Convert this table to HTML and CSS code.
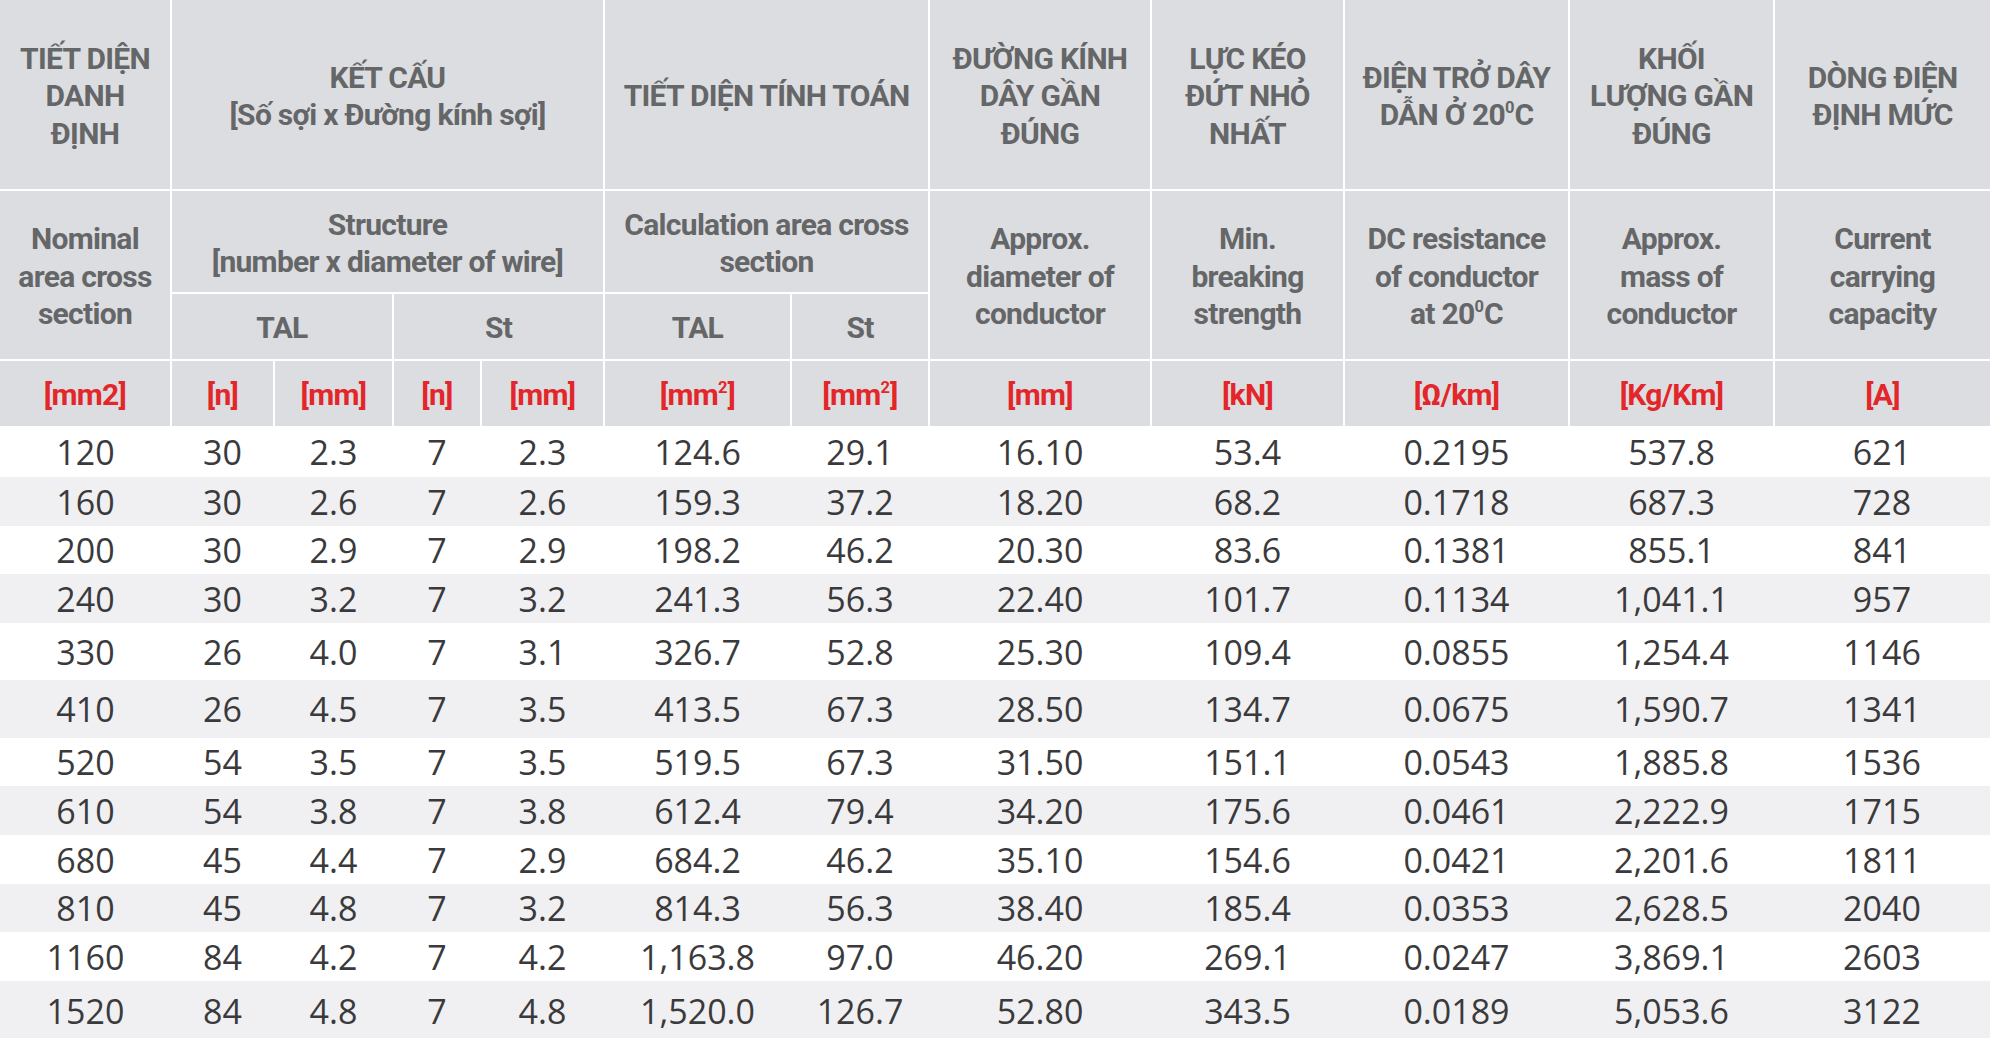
FILE: index.html
```html
<!DOCTYPE html>
<html lang="vi">
<head>
<meta charset="utf-8">
<title>Bảng thông số dây dẫn</title>
<link rel="stylesheet" href="styles.css">
</head>
<body>
<table class="spec">
  <colgroup>
    <col class="c1"><col class="c2"><col class="c3"><col class="c4"><col class="c5"><col class="c6">
    <col class="c7"><col class="c8"><col class="c9"><col class="c10"><col class="c11"><col class="c12">
  </colgroup>
  <thead>
    <tr class="hr-a">
      <th>TIẾT DIỆN<br>DANH<br>ĐỊNH</th>
      <th colspan="4">KẾT CẤU<br>[Số sợi x Đường kính sợi]</th>
      <th colspan="2">TIẾT DIỆN TÍNH TOÁN</th>
      <th>ĐƯỜNG KÍNH<br>DÂY GẦN<br>ĐÚNG</th>
      <th>LỰC KÉO<br>ĐỨT NHỎ<br>NHẤT</th>
      <th>ĐIỆN TRỞ DÂY<br>DẪN Ở 20<sup>0</sup>C</th>
      <th>KHỐI<br>LƯỢNG GẦN<br>ĐÚNG</th>
      <th class="last">DÒNG ĐIỆN<br>ĐỊNH MỨC</th>
    </tr>
    <tr class="hr-b">
      <th rowspan="2">Nominal<br>area cross<br>section</th>
      <th colspan="4">Structure<br>[number x diameter of wire]</th>
      <th colspan="2">Calculation area cross<br>section</th>
      <th rowspan="2">Approx.<br>diameter of<br>conductor</th>
      <th rowspan="2">Min.<br>breaking<br>strength</th>
      <th rowspan="2">DC resistance<br>of conductor<br>at 20<sup>0</sup>C</th>
      <th rowspan="2">Approx.<br>mass of<br>conductor</th>
      <th rowspan="2" class="last">Current<br>carrying<br>capacity</th>
    </tr>
    <tr class="hr-c">
      <th colspan="2">TAL</th>
      <th colspan="2">St</th>
      <th>TAL</th>
      <th>St</th>
    </tr>
    <tr class="hr-d unit">
      <th>[mm2]</th>
      <th>[n]</th>
      <th>[mm]</th>
      <th>[n]</th>
      <th>[mm]</th>
      <th>[mm<sup>2</sup>]</th>
      <th>[mm<sup>2</sup>]</th>
      <th>[mm]</th>
      <th>[kN]</th>
      <th>[Ω/km]</th>
      <th>[Kg/Km]</th>
      <th class="last">[A]</th>
    </tr>
  </thead>
  <tbody>
    <tr class="r51"><td>120</td><td>30</td><td>2.3</td><td>7</td><td>2.3</td><td>124.6</td><td>29.1</td><td>16.10</td><td>53.4</td><td>0.2195</td><td>537.8</td><td>621</td></tr>
    <tr class="r49 alt"><td>160</td><td>30</td><td>2.6</td><td>7</td><td>2.6</td><td>159.3</td><td>37.2</td><td>18.20</td><td>68.2</td><td>0.1718</td><td>687.3</td><td>728</td></tr>
    <tr class="r48"><td>200</td><td>30</td><td>2.9</td><td>7</td><td>2.9</td><td>198.2</td><td>46.2</td><td>20.30</td><td>83.6</td><td>0.1381</td><td>855.1</td><td>841</td></tr>
    <tr class="r49 alt"><td>240</td><td>30</td><td>3.2</td><td>7</td><td>3.2</td><td>241.3</td><td>56.3</td><td>22.40</td><td>101.7</td><td>0.1134</td><td>1,041.1</td><td>957</td></tr>
    <tr class="r57"><td>330</td><td>26</td><td>4.0</td><td>7</td><td>3.1</td><td>326.7</td><td>52.8</td><td>25.30</td><td>109.4</td><td>0.0855</td><td>1,254.4</td><td>1146</td></tr>
    <tr class="r58 alt"><td>410</td><td>26</td><td>4.5</td><td>7</td><td>3.5</td><td>413.5</td><td>67.3</td><td>28.50</td><td>134.7</td><td>0.0675</td><td>1,590.7</td><td>1341</td></tr>
    <tr class="r48"><td>520</td><td>54</td><td>3.5</td><td>7</td><td>3.5</td><td>519.5</td><td>67.3</td><td>31.50</td><td>151.1</td><td>0.0543</td><td>1,885.8</td><td>1536</td></tr>
    <tr class="r49 alt"><td>610</td><td>54</td><td>3.8</td><td>7</td><td>3.8</td><td>612.4</td><td>79.4</td><td>34.20</td><td>175.6</td><td>0.0461</td><td>2,222.9</td><td>1715</td></tr>
    <tr class="r49"><td>680</td><td>45</td><td>4.4</td><td>7</td><td>2.9</td><td>684.2</td><td>46.2</td><td>35.10</td><td>154.6</td><td>0.0421</td><td>2,201.6</td><td>1811</td></tr>
    <tr class="r48 alt"><td>810</td><td>45</td><td>4.8</td><td>7</td><td>3.2</td><td>814.3</td><td>56.3</td><td>38.40</td><td>185.4</td><td>0.0353</td><td>2,628.5</td><td>2040</td></tr>
    <tr class="r49"><td>1160</td><td>84</td><td>4.2</td><td>7</td><td>4.2</td><td>1,163.8</td><td>97.0</td><td>46.20</td><td>269.1</td><td>0.0247</td><td>3,869.1</td><td>2603</td></tr>
    <tr class="r60 alt"><td>1520</td><td>84</td><td>4.8</td><td>7</td><td>4.8</td><td>1,520.0</td><td>126.7</td><td>52.80</td><td>343.5</td><td>0.0189</td><td>5,053.6</td><td>3122</td></tr>
  </tbody>
</table>
</body>
</html>
```

FILE: styles.css
```css
html, body {
  margin: 0;
  padding: 0;
  background: #ffffff;
}

.spec {
  width: 1990px;
  table-layout: fixed;
  border-collapse: collapse;
  border-spacing: 0;
}

.c1 { width: 171px; }
.c2 { width: 103px; }
.c3 { width: 119px; }
.c4 { width: 88px; }
.c5 { width: 123px; }
.c6 { width: 187px; }
.c7 { width: 138px; }
.c8 { width: 222px; }
.c9 { width: 193px; }
.c10 { width: 225px; }
.c11 { width: 205px; }
.c12 { width: 216px; }

.spec th {
  background: #dcdde0;
  color: #656668;
  font-family: Roboto, "Open Sans", "Liberation Sans", sans-serif;
  font-weight: 700;
  font-size: 30px;
  letter-spacing: -0.7px;
  line-height: 37.5px;
  text-align: center;
  vertical-align: middle;
  padding: 3px 0 0;
  border-right: 2px solid #ffffff;
  border-bottom: 2px solid #ffffff;
  white-space: nowrap;
}

.spec th.last {
  border-right: none;
}

.spec .hr-d th {
  border-bottom: none;
}

.spec th sup {
  font-size: 0.55em;
  line-height: 0;
  vertical-align: 0.75em;
  letter-spacing: 0;
}

.unit th {
  color: #e3262a;
}

.hr-a { height: 190px; }
.hr-b { height: 103px; }
.hr-c { height: 67px; }
.hr-d { height: 66px; }

.spec td {
  font-family: "Open Sans", "Liberation Sans", sans-serif;
  font-weight: 400;
  font-size: 34px;
  color: #3a3a3c;
  text-align: center;
  vertical-align: middle;
  padding: 0;
  line-height: 1;
  background: #ffffff;
}

.spec tr.alt td {
  background: #f0f0f2;
}

.r48 { height: 48px; }
.r49 { height: 49px; }
.r51 { height: 51px; }
.r57 { height: 57px; }
.r58 { height: 58px; }
.r60 { height: 60px; }
```
